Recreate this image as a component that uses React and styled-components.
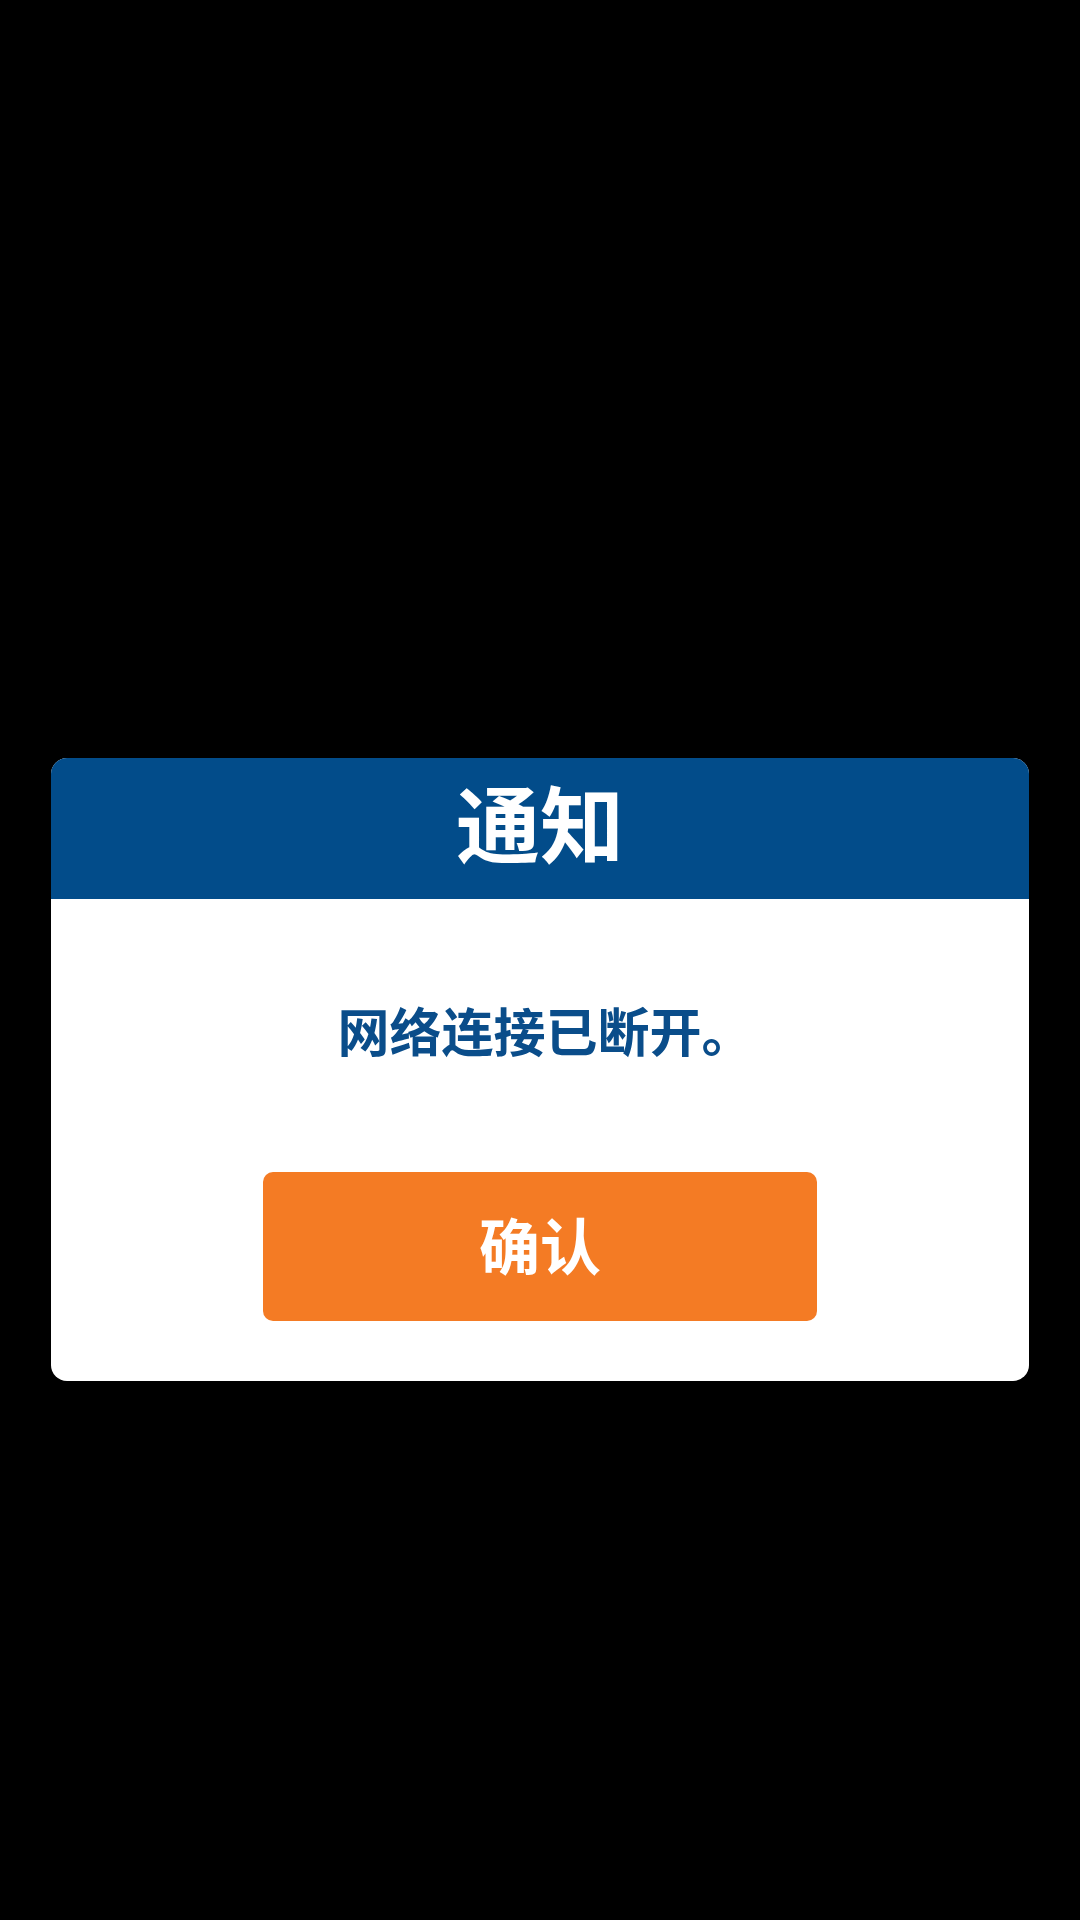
import React from "react";
import styled, { createGlobalStyle } from "styled-components";

const GlobalStyle = createGlobalStyle`
  html, body {
    margin: 0;
    padding: 0;
    background: #000;
  }
  body {
    font-family: "Noto Sans CJK SC", "Noto Sans", sans-serif;
  }
`;

const Screen = styled.div`
  box-sizing: border-box;
  width: 1080px;
  min-height: 1920px;
  background: #000;
  padding: 758px 51px 0;
  display: flex;
  flex-direction: column;
  align-items: stretch;
`;

const Dialog = styled.div`
  background: #fff;
  border-radius: 16px;
  overflow: hidden;
  display: flex;
  flex-direction: column;
`;

const Header = styled.div`
  box-sizing: border-box;
  height: 141px;
  padding-bottom: 16px;
  background: #024c8a;
  display: flex;
  align-items: center;
  justify-content: center;
`;

const Title = styled.h1`
  margin: 0;
  color: #fff;
  font-size: 84px;
  font-weight: 700;
  line-height: 1;
`;

const Body = styled.div`
  display: flex;
  flex-direction: column;
  align-items: center;
  padding: 105px 0 60px;
`;

const Message = styled.p`
  margin: 0;
  padding-left: 11px;
  color: #0a4d8a;
  font-size: 52px;
  font-weight: 700;
  line-height: 1;
`;

const ConfirmButton = styled.button`
  box-sizing: border-box;
  margin-top: 116px;
  width: 554px;
  height: 149px;
  border: none;
  border-radius: 10px;
  background: #f47b24;
  color: #fff;
  font-family: "Noto Sans CJK SC", "Noto Sans", sans-serif;
  font-size: 61px;
  font-weight: 700;
  line-height: 1;
  display: flex;
  align-items: center;
  justify-content: center;
  padding: 0 0 6px;
  cursor: pointer;
`;

export default function App() {
  return (
    <>
      <GlobalStyle />
      <Screen>
        <Dialog>
          <Header>
            <Title>通知</Title>
          </Header>
          <Body>
            <Message>网络连接已断开。</Message>
            <ConfirmButton>确认</ConfirmButton>
          </Body>
        </Dialog>
      </Screen>
    </>
  );
}
